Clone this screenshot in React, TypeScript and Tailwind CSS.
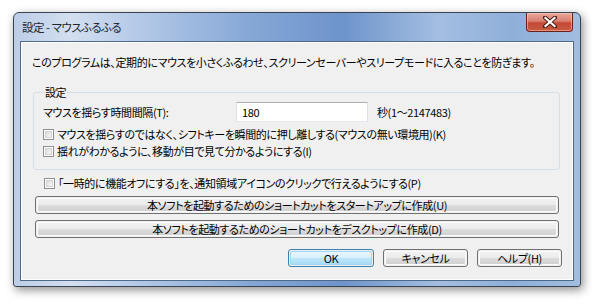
import { ReactNode } from "react";

const font = "font-['Noto_Sans_CJK_JP','Noto_Sans',sans-serif] [font-feature-settings:'palt']";

function Check({ label }: { label: string }) {
	return (
		<div className="flex items-center h-[14px]">
			<div className="w-[11px] h-[11px] border border-[#8e8f8f] bg-white p-[1px] shrink-0">
				<div className="w-full h-full border border-[#d2d2d2] bg-gradient-to-br from-[#dcdcdc] to-[#f7f7f7]" />
			</div>
			<span className="ml-[3px] whitespace-nowrap">{label}</span>
		</div>
	);
}

function Btn({ children, className = "", primary = false }: { children: ReactNode; className?: string; primary?: boolean }) {
	return (
		<div
			className={`rounded-[3px] border ${primary ? "border-[#3c7fb1]" : "border-[#707070]"} p-[1px] ${className}`}
		>
			<div
				className={`h-full rounded-[2px] flex items-center justify-center whitespace-nowrap ${
					primary
						? "bg-[linear-gradient(#eaf6fd_0%,#d9f0fc_50%,#bee6fd_50%,#a7d9f5_100%)] shadow-[inset_0_0_0_1px_#9fd6f3]"
						: "bg-[linear-gradient(#f2f2f2_0%,#ebebeb_50%,#dddddd_50%,#cfcfcf_100%)] shadow-[inset_0_0_0_1px_#fbfbfb]"
				}`}
			>
				{children}
			</div>
		</div>
	);
}

export default function App() {
	return (
		<div className={`w-[595px] h-[304px] bg-white pl-[13px] pt-[12px] ${font} text-[11px] leading-[14px] tracking-[-0.38px] text-black`}>
			<div className="w-[568px] h-[275px] rounded-t-[6px] rounded-b-[3px] border border-[#3b4452] shadow-[2px_3px_10px_rgba(0,0,0,0.45)] bg-[linear-gradient(90deg,#bccde6_0%,#d3dff0_10%,#b4c9e7_22%,#85a7d6_42%,#6d94cb_58%,#a4bee1_75%,#8fafd9_88%,#a2bde0_100%)] flex flex-col overflow-hidden">
				<div className="h-[28px] flex justify-between pl-[8px] pr-[7px]">
					<div className="text-[11.5px] tracking-[-0.5px] text-[#1e2633] pt-[7px] whitespace-pre">設定 - マウスふるふる</div>
					<div className="w-[47px] h-[19px] rounded-b-[4px] border border-t-0 border-[#6b1f17] bg-[linear-gradient(#e9a99c_0%,#d88071_45%,#c44a39_55%,#c85a40_100%)] shadow-[inset_0_0_0_1px_rgba(255,210,200,0.5)] flex items-center justify-center">
						<svg width="14" height="12" viewBox="0 0 14 12">
							<path d="M2 1.5 L12 10.5 M12 1.5 L2 10.5" stroke="#4a1a14" strokeWidth="4" strokeLinecap="square" />
							<path d="M2.5 2 L11.5 10 M11.5 2 L2.5 10" stroke="#ffffff" strokeWidth="2.2" strokeLinecap="square" />
						</svg>
					</div>
				</div>
				<div className="flex-1 mx-[6px] mb-[5px] border border-[#4f6989] bg-[linear-gradient(#9fbbe0,#7799cc)]">
					<div className="h-full border border-white bg-[#f0f0f0] flex flex-col">
						<div className="mt-[12px] ml-[10px] whitespace-nowrap">
							このプログラムは、定期的にマウスを小さくふるわせ、スクリーンセーバーやスリープモードに入ることを防ぎます。
						</div>
						<fieldset className="mt-[16px] ml-[11px] w-[527px] border border-[#d5dfe5] rounded-[3px] px-[9px] pb-[11px]">
							<legend className="ml-[1px] px-[1px]">設定</legend>
							<div className="flex items-center h-[20px] mt-[3px]">
								<span className="w-[193px] whitespace-nowrap">マウスを揺らす時間間隔(T):</span>
								<div className="w-[132px] h-[20px] border border-[#abadb3] border-b-[#e3e9ef] border-x-[#dbdfe6] bg-white pl-[5px] flex items-center">
									180
								</div>
								<span className="ml-[9px]">秒(1～2147483)</span>
							</div>
							<div className="mt-[5px]">
								<Check label="マウスを揺らすのではなく、シフトキーを瞬間的に押し離しする(マウスの無い環境用)(K)" />
							</div>
							<div className="mt-[3px]">
								<Check label="揺れがわかるように、移動が目で見て分かるようにする(I)" />
							</div>
						</fieldset>
						<div className="mt-[6px] ml-[22px]">
							<Check label="「一時的に機能オフにする」を、通知領域アイコンのクリックで行えるようにする(P)" />
						</div>
						<Btn className="mt-[6px] ml-[13px] w-[524px] h-[18px]">
							本ソフトを起動するためのショートカットをスタートアップに作成(U)
						</Btn>
						<Btn className="mt-[6px] ml-[13px] w-[524px] h-[18px]">
							本ソフトを起動するためのショートカットをデスクトップに作成(D)
						</Btn>
						<div className="mt-[11px] ml-[266px] flex gap-[9px]">
							<Btn primary className="w-[86px] h-[18px]">OK</Btn>
							<Btn className="w-[85px] h-[18px]">キャンセル</Btn>
							<Btn className="w-[85px] h-[18px]">ヘルプ(H)</Btn>
						</div>
					</div>
				</div>
			</div>
		</div>
	);
}
